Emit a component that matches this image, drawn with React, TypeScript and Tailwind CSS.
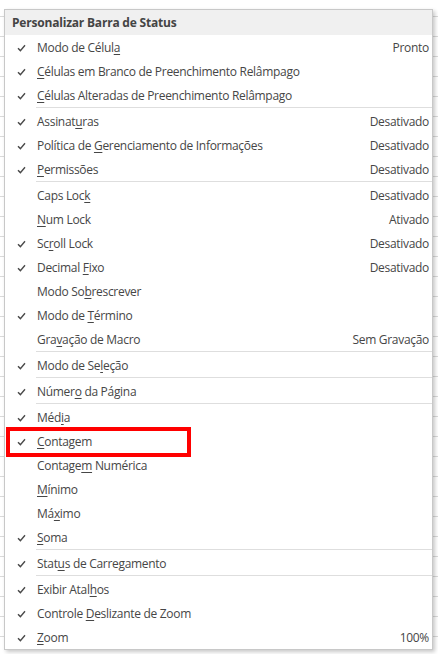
type MenuItem = {
  label: string;
  value?: string;
  checked?: boolean;
};

type Entry = MenuItem | 'sep';

// "&" marks the accelerator letter (underlined)
const ITEMS: Entry[] = [
  { label: 'Modo de Célul&a', value: 'Pronto', checked: true },
  { label: '&Células em Branco de Preenchimento Relâmpago', checked: true },
  { label: '&Células Alteradas de Preenchimento Relâmpago', checked: true },
  'sep',
  { label: 'Assinat&uras', value: 'Desativado', checked: true },
  { label: 'Política de &Gerenciamento de Informações', value: 'Desativado', checked: true },
  { label: '&Permissões', value: 'Desativado', checked: true },
  'sep',
  { label: 'Caps Loc&k', value: 'Desativado' },
  { label: '&Num Lock', value: 'Ativado' },
  { label: 'Sc&roll Lock', value: 'Desativado', checked: true },
  { label: 'Decimal &Fixo', value: 'Desativado', checked: true },
  { label: 'Modo So&brescrever' },
  { label: 'Modo de &Término', checked: true },
  { label: 'Gra&vação de Macro', value: 'Sem Gravação' },
  'sep',
  { label: 'Modo de Se&leção', checked: true },
  'sep',
  { label: 'Númer&o da Página', checked: true },
  'sep',
  { label: 'Méd&ia', checked: true },
  { label: '&Contagem', checked: true },
  { label: 'Contage&m Numérica' },
  { label: '&Mínimo' },
  { label: 'Má&ximo' },
  { label: '&Soma', checked: true },
  'sep',
  { label: 'Stat&us de Carregamento', checked: true },
  'sep',
  { label: 'Exibir Atal&hos', checked: true },
  { label: 'Controle &Deslizante de Zoom', checked: true },
  { label: '&Zoom', value: '100%', checked: true },
];

const Label = ({ text }: { text: string }) => {
  const i = text.indexOf('&');
  if (i < 0) return <span>{text}</span>;
  return (
    <span>
      {text.slice(0, i)}
      <u className="underline-offset-2">{text.charAt(i + 1)}</u>
      {text.slice(i + 2)}
    </span>
  );
};

const Check = () => (
  <svg width="9" height="8" viewBox="0 0 9 8" className="block">
    <path d="M1 4.2 L3.4 6.6 L8 1.2" fill="none" stroke="#4a4a4a" strokeWidth="1.4" />
  </svg>
);

export default function App() {
  return (
    <div className="relative w-[438px] h-[654px] overflow-hidden bg-white bg-[linear-gradient(to_bottom,transparent_16px,#dadada_16px,#dadada_17px,transparent_17px)] bg-[length:100%_20px] font-['Open_Sans','Noto_Sans',sans-serif] text-[12px] tracking-[-0.3px] text-[#464646] pt-[9px] pl-[4px]">
      <div className="w-[429px] border border-[#c8c8c8] bg-white shadow-[2px_2px_4px_rgba(0,0,0,0.22)]">
        <div className="h-[25px] flex items-center pl-[7px] pt-px bg-[#f0f0f0] font-bold text-[#444444] tracking-[-0.2px]">
          Personalizar Barra de Status
        </div>
        {ITEMS.map((item, idx) =>
          item === 'sep' ? (
            <div key={idx} className="ml-[31px] border-t border-[#dedede] mb-px" />
          ) : (
            <div key={idx} className="h-6 flex items-center pt-[2px]">
              <div className="w-8 flex justify-center pl-[1px]">{item.checked && <Check />}</div>
              <div className="flex-1 whitespace-nowrap">
                <Label text={item.label} />
              </div>
              {item.value && <div className="pr-[3px] whitespace-nowrap">{item.value}</div>}
            </div>
          )
        )}
      </div>
      <div className="absolute left-[6px] top-[427px] w-[185px] h-[30px] border-4 border-[#ff0000]" />
    </div>
  );
}
